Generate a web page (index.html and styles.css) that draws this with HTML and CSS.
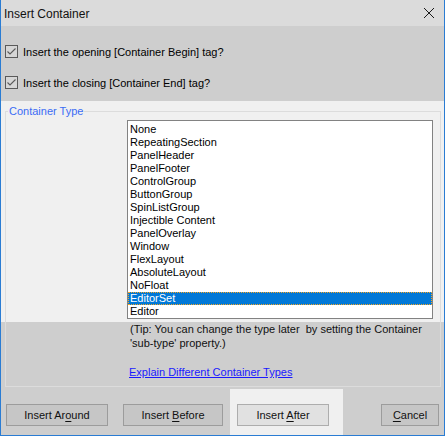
FILE: index.html
```html
<!DOCTYPE html>
<html>
<head>
<meta charset="utf-8">
<link rel="stylesheet" href="styles.css">
</head>
<body>
<div class="win">
  <div class="titlebar">
    <span class="title">Insert Container</span>
    <svg class="close" width="12" height="12" viewBox="0 0 12 12"><path d="M1 1 L11 11 M11 1 L1 11" stroke="#1a1a1a" stroke-width="1" fill="none"/></svg>
  </div>
  <div class="top">
    <div class="chk">
      <svg width="13" height="13" viewBox="0 0 13 13"><rect x="0.5" y="0.5" width="12" height="12" fill="#d6d6d6" stroke="#5a5a5a"/><path d="M2.5 6.5 L5 9 L10.5 3.5" stroke="#5a5a5a" stroke-width="1.1" fill="none"/></svg>
      <span>Insert the opening [Container Begin] tag?</span>
    </div>
    <div class="chk">
      <svg width="13" height="13" viewBox="0 0 13 13"><rect x="0.5" y="0.5" width="12" height="12" fill="#d6d6d6" stroke="#5a5a5a"/><path d="M2.5 6.5 L5 9 L10.5 3.5" stroke="#5a5a5a" stroke-width="1.1" fill="none"/></svg>
      <span>Insert the closing [Container End] tag?</span>
    </div>
  </div>
  <div class="main">
    <fieldset class="group">
      <legend>Container Type</legend>
      <ul class="list">
        <li>None</li>
        <li>RepeatingSection</li>
        <li>PanelHeader</li>
        <li>PanelFooter</li>
        <li>ControlGroup</li>
        <li>ButtonGroup</li>
        <li>SpinListGroup</li>
        <li>Injectible Content</li>
        <li>PanelOverlay</li>
        <li>Window</li>
        <li>FlexLayout</li>
        <li>AbsoluteLayout</li>
        <li>NoFloat</li>
        <li class="sel">EditorSet</li>
        <li>Editor</li>
      </ul>
      <p class="tip">(Tip: You can change the type later&nbsp; by setting the Container<br>'sub-type' property.)</p>
      <a class="link" href="#">Explain Different Container Types</a>
    </fieldset>
    <div class="buttons">
      <button class="btn b-around">Insert Ar<u>o</u>und</button>
      <button class="btn b-before">Insert <u>B</u>efore</button>
      <div class="hot"><button class="btn b-after">Insert <u>A</u>fter</button></div>
      <button class="btn b-cancel"><u>C</u>ancel</button>
    </div>
  </div>
</div>
</body>
</html>
```

FILE: styles.css
```css
html, body {
  margin: 0;
  padding: 0;
  background: #cecece;
}
body {
  font-family: "Liberation Sans", Arial, sans-serif;
  font-size: 11px;
  color: #000;
}
.win {
  width: 445px;
  height: 436px;
  box-sizing: border-box;
  border: 1px solid #2a7cd3;
  border-top: none;
  display: flex;
  flex-direction: column;
  background: #cecece;
}
.titlebar {
  height: 26px;
  flex: none;
  background: #dbdbdb;
  display: flex;
  align-items: center;
  padding-left: 3px;
  padding-right: 9px;
}
.title {
  font-size: 12px;
  line-height: 16px;
  color: #111;
  flex: 1;
  padding-top: 1px;
}
.close {
  display: block;
  margin-top: -1px;
}
.top {
  height: 75px;
  box-sizing: border-box;
  padding: 19px 0 0 4px;
  display: flex;
  flex-direction: column;
  gap: 18px;
}
.chk {
  display: flex;
  align-items: center;
  height: 13px;
  gap: 5px;
}
.chk svg {
  display: block;
  flex: none;
}
.chk span {
  line-height: 13px;
  padding-top: 1px;
}
.main {
  flex: 1;
  padding: 4px 3px 0 4px;
  background: linear-gradient(to bottom, #f0f0f0 0, #f0f0f0 221px, #cecece 221px, #cecece 100%);
  display: flex;
  flex-direction: column;
}
.group {
  margin: 0;
  padding: 2px 0 7px 0;
  border: 1px solid #dcdcdc;
  min-width: 0;
}
.group legend {
  margin-left: 2px;
  padding: 0 1px;
  color: #3b6cf5;
  line-height: 13px;
}
.list {
  list-style: none;
  margin: 0 0 0 121px;
  padding: 2px 0 0 0;
  width: 306px;
  box-sizing: border-box;
  border: 1px solid #828282;
  background: #fff;
}
.list li {
  height: 13px;
  line-height: 13px;
  padding-left: 2px;
  white-space: nowrap;
}
.list li.sel {
  background: #0078d7;
  color: #fff;
  outline: 1px dotted #f5a623;
  outline-offset: -1px;
}
.tip {
  margin: 3px 0 0 124px;
  line-height: 14px;
  color: #111;
}
.link {
  display: block;
  margin: 16px 0 0 123px;
  line-height: 13px;
  color: #1a1aff;
  text-decoration: underline;
  width: max-content;
}
.buttons {
  margin-top: 2px;
  flex: 1;
  display: flex;
  align-items: flex-start;
}
.btn {
  font-family: "Liberation Sans", Arial, sans-serif;
  font-size: 11px;
  color: #111;
  height: 22px;
  margin: 15px 0 0 0;
  padding: 0;
  border: 1px solid #9c9c9c;
  background: #c6c6c6;
  line-height: 18px;
}
.btn u {
  text-underline-offset: 2px;
}
.b-around {
  width: 102px;
  margin-left: 1px;
}
.b-before {
  width: 100px;
  margin-left: 15px;
}
.hot {
  align-self: stretch;
  margin-left: 7px;
  padding: 0 14px 0 7px;
  background: #f0f0f0;
}
.b-after {
  width: 92px;
  background: #e1e1e1;
  border-color: #adadad;
}
.b-cancel {
  width: 58px;
  margin-left: auto;
  margin-right: 2px;
}
```
